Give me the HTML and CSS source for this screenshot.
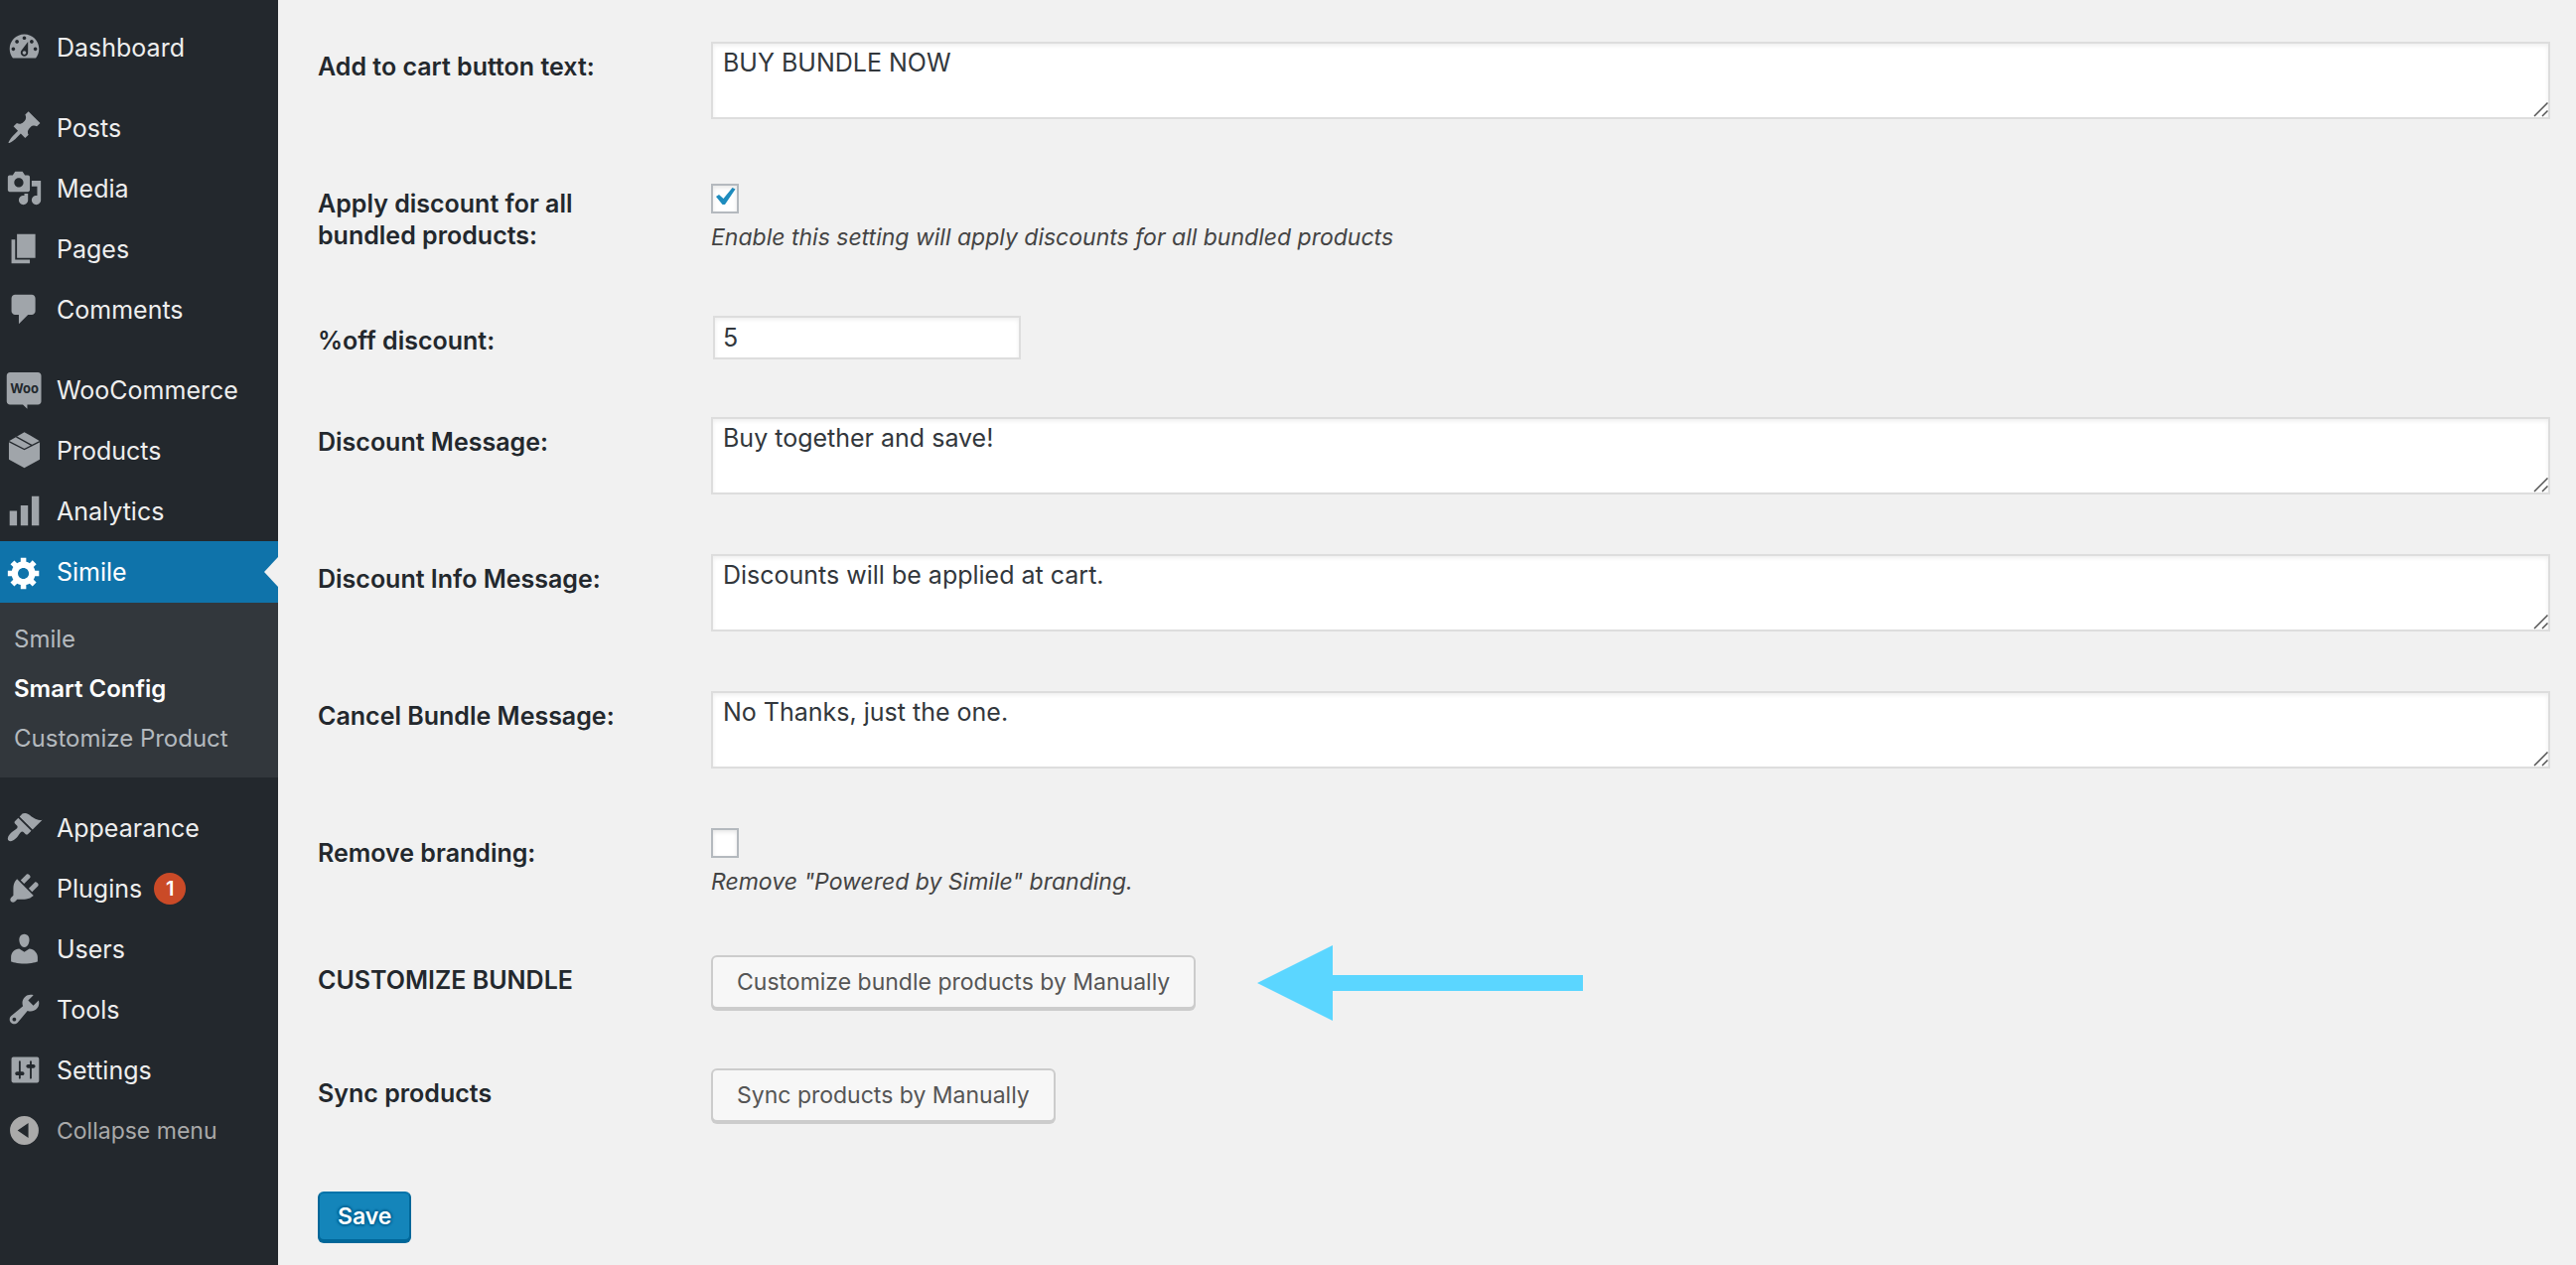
FILE: index.html
```html
<!DOCTYPE html>
<html lang="en">
<head>
<meta charset="utf-8">
<title>Smart Config</title>
<link rel="stylesheet" href="styles.css">
</head>
<body>
<div class="layout">
  <nav class="sidebar" aria-label="Main menu">
    <ul class="menu">
      <li><a class="menu-item" href="#"><svg class="icon" viewBox="0 0 20 20"><path fill-rule="evenodd" d="M3.76 16h12.48c1.1-1.37 1.76-3.11 1.76-5 0-4.42-3.58-8-8-8s-8 3.58-8 8c0 1.89.66 3.63 1.76 5zM10 4c.55 0 1 .45 1 1s-.45 1-1 1-1-.45-1-1 .45-1 1-1zM6 6c.55 0 1 .45 1 1s-.45 1-1 1-1-.45-1-1 .45-1 1-1zm8 0c.55 0 1 .45 1 1s-.45 1-1 1-1-.45-1-1 .45-1 1-1zm-5.37 5.55L12 7v6c0 1.1-.9 2-2 2s-2-.9-2-2c0-.57.24-1.08.63-1.45zM4 10c.55 0 1 .45 1 1s-.45 1-1 1-1-.45-1-1 .45-1 1-1zm12 0c.55 0 1 .45 1 1s-.45 1-1 1-1-.45-1-1 .45-1 1-1zm-5 3c0-.55-.45-1-1-1s-1 .45-1 1 .45 1 1 1 1-.45 1-1z"/></svg>Dashboard</a></li>
    </ul>
    <ul class="menu">
      <li><a class="menu-item" href="#"><svg class="icon" viewBox="0 0 20 20"><path d="M10.44 3.02l1.82-1.82 6.36 6.35-1.83 1.82c-1.05-.68-2.48-.57-3.41.36l-.75.75c-.92.93-1.04 2.35-.35 3.41l-1.83 1.82-2.41-2.41-2.8 2.79c-.42.42-3.38 2.71-3.8 2.29s1.86-3.39 2.28-3.81l2.79-2.79L4.1 9.36l1.83-1.82c1.05.69 2.48.57 3.4-.36l.75-.75c.93-.92 1.05-2.35.36-3.41z"/></svg>Posts</a></li>
      <li><a class="menu-item" href="#"><svg class="icon" viewBox="0 0 20 20"><path fill-rule="evenodd" d="M13 11V4c0-.55-.45-1-1-1h-1.67L9 1H5L3.67 3H2c-.55 0-1 .45-1 1v7c0 .55.45 1 1 1h10c.55 0 1-.45 1-1zM7 4.5c1.38 0 2.5 1.12 2.5 2.5S8.38 9.5 7 9.5 4.5 8.38 4.5 7 5.62 4.5 7 4.5zM14 6h5v10.5c0 1.38-1.12 2.5-2.5 2.5S14 17.88 14 16.5s1.12-2.5 2.5-2.5c.17 0 .34.02.5.05V9h-3V6zm-4 8.05V13h2v3.5c0 1.38-1.12 2.5-2.5 2.5S7 17.88 7 16.5 8.12 14 9.5 14c.17 0 .34.02.5.05z"/></svg>Media</a></li>
      <li><a class="menu-item" href="#"><svg class="icon" viewBox="0 0 20 20"><path d="M6 15V2h10v13H6zm-1 1h8v2H3V5h2v11z"/></svg>Pages</a></li>
      <li><a class="menu-item" href="#"><svg class="icon" viewBox="0 0 20 20"><path d="M5 2h9c1.1 0 2 .9 2 2v7c0 1.1-.9 2-2 2h-2l-5 5v-5H5c-1.1 0-2-.9-2-2V4c0-1.1.9-2 2-2z"/></svg>Comments</a></li>
    </ul>
    <ul class="menu">
      <li><a class="menu-item" href="#"><svg class="icon" viewBox="0 0 20 20"><path d="M2.2.6h15.2c1 0 1.8.8 1.8 1.8v13.9c0 1-.8 1.8-1.8 1.8h-5.8v2.3l-2.4-2.3h-7c-1 0-1.8-.8-1.8-1.8V2.4c0-1 .8-1.8 1.8-1.8z"/><text class="icon-text" x="10" y="12" text-anchor="middle">Woo</text></svg>WooCommerce</a></li>
      <li><a class="menu-item" href="#"><svg class="icon" viewBox="0 0 20 20"><path d="M10 .1l3.2 1.8 5.2 3.1v10L10 19.6 1.6 15V5l3.3-1.9z"/><path class="icon-line" d="M1.6 5.2l8.4 4.3 8.4-4.3M5.6 2.6l8.8 4.9"/></svg>Products</a></li>
      <li><a class="menu-item" href="#"><svg class="icon" viewBox="0 0 20 20"><path d="M18 18V2h-4v16h4zm-6 0V7H8v11h4zm-6 0v-8H2v8h4z"/></svg>Analytics</a></li>
      <li>
        <a class="menu-item menu-item-current" href="#"><svg class="icon" viewBox="0 0 20 20"><path fill-rule="evenodd" d="M18 12h-2.18c-.17.7-.44 1.35-.81 1.93l1.54 1.54-2.1 2.1-1.54-1.54c-.58.36-1.23.63-1.91.79V19H8v-2.18c-.68-.16-1.33-.43-1.91-.79l-1.54 1.54-2.12-2.12 1.54-1.54c-.36-.58-.63-1.23-.79-1.91H1V9.03h2.17c.16-.7.44-1.35.8-1.94L2.43 5.55l2.1-2.1 1.54 1.54c.58-.37 1.24-.64 1.93-.81V2h3v2.18c.68.16 1.33.43 1.91.79l1.54-1.54 2.12 2.12-1.54 1.54c.36.59.64 1.24.8 1.94H18V12zm-8.5 1.5c1.66 0 3-1.34 3-3s-1.34-3-3-3-3 1.34-3 3 1.34 3 3 3z"/></svg>Simile</a>
        <ul class="submenu">
          <li><a class="submenu-item" href="#">Smile</a></li>
          <li><a class="submenu-item submenu-item-current" href="#">Smart Config</a></li>
          <li><a class="submenu-item" href="#">Customize Product</a></li>
        </ul>
      </li>
    </ul>
    <ul class="menu">
      <li><a class="menu-item" href="#"><svg class="icon" viewBox="0 0 20 20"><path d="M14.48 11.06L7.41 3.99l1.5-1.5c.5-.56 2.3-.47 3.51.32 1.21.8 1.43 1.28 2.91 2.1 1.18.64 2.45 1.26 4.45.85zm-.71.71L6.7 4.7 4.93 6.47c-.39.39-.39 1.02 0 1.41l1.06 1.06c.39.39.39 1.03 0 1.42-.6.6-1.43 1.11-2.21 1.69-.35.26-.7.53-1.01.84C1.43 14.23.4 16.08 1.4 17.07c.99 1 2.84-.03 4.18-1.36.31-.31.58-.66.85-1.02.57-.78 1.08-1.61 1.69-2.21.39-.39 1.02-.39 1.41 0l1.06 1.06c.39.39 1.02.39 1.41 0z"/></svg>Appearance</a></li>
      <li><a class="menu-item" href="#"><svg class="icon" viewBox="0 0 20 20"><path d="M13.11 4.36L9.87 7.6 8 5.73l3.24-3.24c.35-.34 1.05-.2 1.56.32.52.51.66 1.21.31 1.55zm-8 1.77l.91-1.12 9.01 9.01-1.19.84c-.71.71-2.63 1.16-3.82 1.16H6.14L4.9 17.26c-.59.59-1.54.59-2.12 0-.59-.58-.59-1.53 0-2.12l1.24-1.24v-3.88c0-1.13.4-3.19 1.09-3.89zm7.26 3.97l3.24-3.24c.34-.35 1.04-.21 1.55.31.52.51.66 1.21.31 1.55l-3.24 3.25z"/></svg>Plugins<span class="badge">1</span></a></li>
      <li><a class="menu-item" href="#"><svg class="icon" viewBox="0 0 20 20"><path d="M10 9.25c-2.27 0-2.73-3.44-2.73-3.44C7 4.02 7.82 2 9.97 2c2.16 0 2.98 2.02 2.71 3.81 0 0-.41 3.44-2.68 3.44zm0 2.57L12.72 10c2.39 0 4.52 2.33 4.52 4.53v2.49s-3.65 1.13-7.24 1.13c-3.65 0-7.24-1.13-7.24-1.13v-2.49c0-2.25 1.94-4.48 4.47-4.48z"/></svg>Users</a></li>
      <li><a class="menu-item" href="#"><svg class="icon" viewBox="0 0 20 20"><path fill-rule="evenodd" d="M16.68 9.77c-1.34 1.34-3.3 1.67-4.95.99l-5.41 6.52c-.99.99-2.59.99-3.58 0s-.99-2.59 0-3.57l6.52-5.42c-.68-1.65-.35-3.61.99-4.95 1.28-1.28 3.12-1.62 4.72-1.06l-2.89 2.89 2.82 2.82 2.86-2.87c.53 1.58.18 3.39-1.08 4.65zM3.81 16.21c.4.39 1.04.39 1.43 0 .4-.4.4-1.04 0-1.43-.39-.4-1.03-.4-1.43 0-.39.39-.39 1.03 0 1.43z"/></svg>Tools</a></li>
      <li><a class="menu-item" href="#"><svg class="icon" viewBox="0 0 20 20"><path fill-rule="evenodd" d="M18 16V4c0-.55-.45-1-1-1H4c-.55 0-1 .45-1 1v12c0 .55.45 1 1 1h13c.55 0 1-.45 1-1zM8 11h1c.55 0 1 .45 1 1s-.45 1-1 1H8v1.5c0 .28-.22.5-.5.5s-.5-.22-.5-.5V13H6c-.55 0-1-.45-1-1s.45-1 1-1h1V5.5c0-.28.22-.5.5-.5s.5.22.5.5V11zm5-2h-1c-.55 0-1-.45-1-1s.45-1 1-1h1V5.5c0-.28.22-.5.5-.5s.5.22.5.5V7h1c.55 0 1 .45 1 1s-.45 1-1 1h-1v5.5c0 .28-.22.5-.5.5s-.5-.22-.5-.5V9z"/></svg>Settings</a></li>
      <li><button class="menu-item menu-collapse" type="button"><svg class="icon" viewBox="0 0 20 20"><path fill-rule="evenodd" d="M10 2.2a7.8 7.8 0 1 0 0 15.6 7.8 7.8 0 0 0 0-15.6zM12.2 6v8L6.3 10z"/></svg>Collapse menu</button></li>
    </ul>
  </nav>

  <main class="content">
    <form class="settings">
      <div class="row">
        <div class="label"><label for="cart-text">Add to cart button text:</label></div>
        <div class="field"><textarea id="cart-text" class="textarea">BUY BUNDLE NOW</textarea></div>
      </div>
      <div class="row row-tall">
        <div class="label"><label for="apply-all">Apply discount for all bundled products:</label></div>
        <div class="field"><input id="apply-all" class="checkbox" type="checkbox" aria-describedby="apply-all-help" checked><p id="apply-all-help" class="help">Enable this setting will apply discounts for all bundled products</p></div>
      </div>
      <div class="row">
        <div class="label"><label for="discount">%off discount:</label></div>
        <div class="field"><input id="discount" class="input" type="text" value="5"></div>
      </div>
      <div class="row">
        <div class="label"><label for="discount-message">Discount Message:</label></div>
        <div class="field"><textarea id="discount-message" class="textarea">Buy together and save!</textarea></div>
      </div>
      <div class="row">
        <div class="label"><label for="discount-info">Discount Info Message:</label></div>
        <div class="field"><textarea id="discount-info" class="textarea">Discounts will be applied at cart.</textarea></div>
      </div>
      <div class="row">
        <div class="label"><label for="cancel-message">Cancel Bundle Message:</label></div>
        <div class="field"><textarea id="cancel-message" class="textarea">No Thanks, just the one.</textarea></div>
      </div>
      <div class="row">
        <div class="label"><label for="branding">Remove branding:</label></div>
        <div class="field"><input id="branding" class="checkbox" type="checkbox" aria-describedby="branding-help"><p id="branding-help" class="help">Remove "Powered by Simile" branding.</p></div>
      </div>
      <div class="row">
        <div class="label"><label for="customize">CUSTOMIZE BUNDLE</label></div>
        <div class="field field-actions"><button id="customize" class="button" type="button">Customize bundle products by Manually</button><svg class="arrow" viewBox="0 0 328 76" aria-hidden="true"><path d="M0 38L76 0v30h252v16H76v30z"/></svg></div>
      </div>
      <div class="row">
        <div class="label"><label for="sync">Sync products</label></div>
        <div class="field field-actions"><button id="sync" class="button" type="button">Sync products by Manually</button></div>
      </div>
      <div class="submit"><button class="button-primary" type="submit">Save</button></div>
    </form>
  </main>
</div>
</body>
</html>
```
FILE: styles.css
```css
* {
  box-sizing: border-box;
}

body {
  margin: 0;
  background: #f1f1f1;
  color: #23282d;
  font-family: Inter, "Liberation Sans", sans-serif;
  font-size: 25px;
  line-height: 32px;
}

button,
input,
textarea {
  margin: 0;
  font: inherit;
}

.layout {
  display: flex;
  min-height: 100vh;
}

/* Sidebar */
.sidebar {
  display: flex;
  flex: none;
  flex-direction: column;
  gap: 20px;
  width: 280px;
  padding-top: 17px;
  background: #23282d;
}

.menu,
.submenu {
  margin: 0;
  padding: 0;
  list-style: none;
}

.menu-item {
  display: flex;
  align-items: center;
  gap: 14px;
  width: 100%;
  height: 61px;
  padding: 0 6px;
  border: 0;
  background: none;
  color: #eee;
  font-size: 25px;
  text-decoration: none;
}

.menu-item-current {
  position: relative;
  height: 62px;
  background: #0f73aa;
  color: #fff;
}

.menu-item-current::after {
  content: "";
  position: absolute;
  top: 16px;
  right: 0;
  width: 14px;
  height: 30px;
  background: #f1f1f1;
  clip-path: polygon(100% 0, 0 50%, 100% 100%);
}

.menu-collapse {
  color: #a9a9a9;
  font-size: 23px;
}

.icon {
  flex: none;
  width: 37px;
  height: 37px;
  overflow: visible;
  fill: #a0a5aa;
}

.menu-item-current .icon {
  fill: #fff;
}

.menu-collapse .icon {
  fill: #aaa;
}

.icon-text {
  fill: #23282d;
  font-size: 7px;
  font-weight: 700;
}

.icon-line {
  fill: none;
  stroke: #23282d;
  stroke-width: 0.7;
}

.badge {
  width: 32px;
  height: 32px;
  margin-left: -2px;
  border-radius: 50%;
  background: #ca4a27;
  color: #fff;
  font-size: 20px;
  font-weight: 600;
  text-align: center;
}

.submenu {
  padding: 12px 0 14px;
  background: #32373c;
}

.submenu-item {
  display: flex;
  align-items: center;
  height: 50px;
  padding: 0 14px;
  color: #b4b9be;
  font-size: 24px;
  text-decoration: none;
}

.submenu-item-current {
  color: #fff;
  font-weight: 600;
}

/* Settings form */
.content {
  flex: 1;
  padding: 12px 26px 20px 40px;
}

.row {
  display: grid;
  grid-template-columns: 376px 1fr;
}

.row-tall {
  min-height: 138px;
}

.label {
  padding: 39px 60px 31px 0;
  font-weight: 600;
}

.field {
  display: flex;
  flex-direction: column;
  justify-content: center;
  align-items: flex-start;
  padding: 30px 0 28px 20px;
}

.field-actions {
  flex-direction: row;
  justify-content: flex-start;
  gap: 62px;
}

.textarea,
.input {
  border: 2px solid #ddd;
  border-radius: 0;
  outline: 0;
  background: #fff;
  box-shadow: inset 0 2px 4px rgba(0, 0, 0, 0.07);
  color: #32373c;
}

.textarea {
  display: block;
  width: 100%;
  height: 78px;
  margin-bottom: 2px;
  padding: 2px 10px;
  line-height: 34px;
  overflow: auto;
  resize: vertical;
}

.textarea::-webkit-resizer {
  background: url("data:image/svg+xml,%3Csvg xmlns='http://www.w3.org/2000/svg' width='15' height='15'%3E%3Cpath d='M1 14L14.5.5M9 14l5.500-5.500' stroke='%23555' stroke-width='1.500'/%3E%3C/svg%3E") no-repeat right bottom;
}

.input {
  width: 310px;
  height: 44px;
  margin: 0 2px;
  padding: 0 8px;
}

.checkbox {
  appearance: none;
  width: 28px;
  height: 30px;
  border: 2px solid #b4b9be;
  background: #fff;
  box-shadow: inset 0 2px 4px rgba(0, 0, 0, 0.1);
}

.checkbox:checked {
  background: #fff url("data:image/svg+xml,%3Csvg xmlns='http://www.w3.org/2000/svg' viewBox='0 0 24 26'%3E%3Cpath d='M3 11l3-2 4.500 4L19.500 2l3 1.500L12 19H9.500z' fill='%231e8cbe'/%3E%3C/svg%3E") no-repeat center;
}

.help {
  margin: 8px 0 0;
  color: #444;
  font-size: 23px;
  font-style: italic;
}

.button,
.button-primary {
  border: 2px solid #ccc;
  border-radius: 6px;
  cursor: pointer;
  font-size: 23px;
}

.button {
  height: 54px;
  margin-bottom: 2px;
  padding: 0 24px;
  background: #f7f7f7;
  box-shadow: 0 2px 0 #ccc;
  color: #555;
}

.submit {
  padding-top: 40px;
}

.button-primary {
  height: 50px;
  padding: 0 18px;
  border-color: #0073aa #006799 #006799;
  background: #1485ba;
  box-shadow: 0 2px 0 #006799;
  color: #fff;
  font-weight: 600;
  text-shadow: 0 -2px 2px #006799, 2px 0 2px #006799, 0 2px 2px #006799, -2px 0 2px #006799;
}

.arrow {
  flex: none;
  width: 328px;
  height: 76px;
  margin: -10px 0;
  fill: #5bd6ff;
}
```
